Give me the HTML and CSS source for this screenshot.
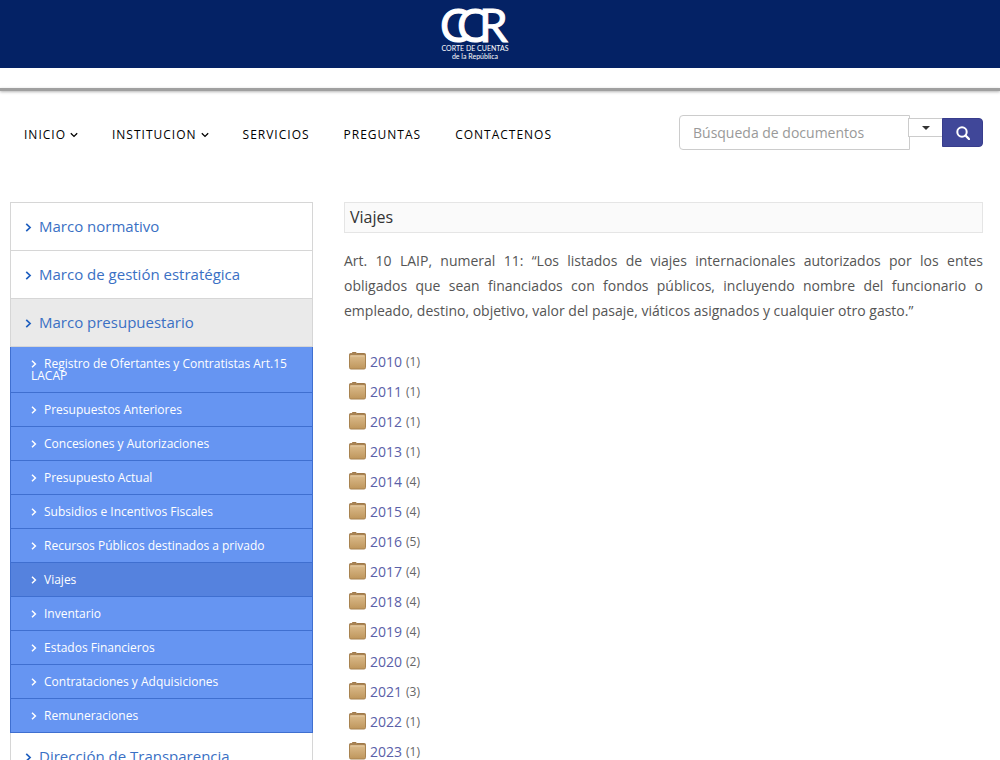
FILE: index.html
```html
<!DOCTYPE html>
<html lang="es">
<head>
<meta charset="utf-8">
<meta name="viewport" content="width=device-width, initial-scale=1">
<title>Viajes - Corte de Cuentas de la República</title>
<link rel="stylesheet" href="styles.css">
</head>
<body>
<svg class="sprite" aria-hidden="true">
  <defs>
    <linearGradient id="kraft" x1="0" y1="0" x2="0" y2="1">
      <stop offset="0" stop-color="#dcbc8c"/>
      <stop offset="1" stop-color="#be965c"/>
    </linearGradient>
  </defs>
  <symbol id="chevron" viewBox="0 0 6 8"><path d="M1 0.8 4.4 4 1 7.2" fill="none" stroke="currentColor" stroke-width="1.5"/></symbol>
  <symbol id="down" viewBox="0 0 8 6"><path d="M0.8 1.2 4 4.4 7.2 1.2" fill="none" stroke="currentColor" stroke-width="1.3"/></symbol>
  <symbol id="folder" viewBox="0 0 17 18">
    <path d="M0.5 5V2.5Q0.5 1.5 1.5 1.5H2.5L3.5 0.5H7L8 1.5H15.5Q16.5 1.5 16.5 2.5V5Z" fill="#a98455" stroke="#a07a4a"/>
    <path d="M0.5 4Q0.5 3 1.5 3H15.5Q16.5 3 16.5 4V15.5Q16.5 17 15 17H2Q0.5 17 0.5 15.5Z" fill="url(#kraft)" stroke="#a88350"/>
    <path d="M1.5 3.9H15.5" stroke="#ead2aa" stroke-width="1"/>
  </symbol>
</svg>

<header class="banner">
  <a class="logo" href="#" aria-label="Corte de Cuentas de la República">
    <svg width="70" height="56" viewBox="0 0 70 56" fill="#fff">
      <g class="logo-mark"><text x="0" y="37">C</text><text x="17" y="37">C</text><text x="39" y="37">R</text></g>
      <text class="logo-name" x="35" y="46">CORTE DE CUENTAS</text>
      <text class="logo-name" x="35" y="54">de la República</text>
    </svg>
  </a>
</header>
<div class="rule"></div>

<div class="topbar">
  <nav class="menu" aria-label="Principal">
    <a href="#">INICIO <svg class="down"><use href="#down"/></svg></a>
    <a href="#">INSTITUCION <svg class="down"><use href="#down"/></svg></a>
    <a href="#">SERVICIOS</a>
    <a href="#">PREGUNTAS</a>
    <a href="#">CONTACTENOS</a>
  </nav>
  <form class="search" role="search">
    <input type="search" aria-label="Búsqueda de documentos" placeholder="Búsqueda de documentos">
    <button class="options" type="button" aria-label="Opciones de búsqueda"><span class="caret"></span></button>
    <button class="submit" type="submit" aria-label="Buscar">
      <svg width="14" height="14" viewBox="0 0 14 14" fill="none" stroke="#fff"><circle cx="6" cy="6" r="4.7" stroke-width="2"/><path d="M9.5 9.5 13 13" stroke-width="2.4" stroke-linecap="round"/></svg>
    </button>
  </form>
</div>

<div class="layout">
  <nav class="side" aria-label="Marcos">
    <ul class="sections">
      <li><a class="section" href="#"><svg class="chevron"><use href="#chevron"/></svg>Marco normativo</a></li>
      <li><a class="section" href="#"><svg class="chevron"><use href="#chevron"/></svg>Marco de gestión estratégica</a></li>
      <li><a class="section open" href="#"><svg class="chevron"><use href="#chevron"/></svg>Marco presupuestario</a>
        <ul class="sub">
          <li><a href="#"><svg class="chevron"><use href="#chevron"/></svg>Registro de Ofertantes y Contratistas Art.15 LACAP</a></li>
          <li><a href="#"><svg class="chevron"><use href="#chevron"/></svg>Presupuestos Anteriores</a></li>
          <li><a href="#"><svg class="chevron"><use href="#chevron"/></svg>Concesiones y Autorizaciones</a></li>
          <li><a href="#"><svg class="chevron"><use href="#chevron"/></svg>Presupuesto Actual</a></li>
          <li><a href="#"><svg class="chevron"><use href="#chevron"/></svg>Subsidios e Incentivos Fiscales</a></li>
          <li><a href="#"><svg class="chevron"><use href="#chevron"/></svg>Recursos Públicos destinados a privado</a></li>
          <li><a class="current" href="#" aria-current="page"><svg class="chevron"><use href="#chevron"/></svg>Viajes</a></li>
          <li><a href="#"><svg class="chevron"><use href="#chevron"/></svg>Inventario</a></li>
          <li><a href="#"><svg class="chevron"><use href="#chevron"/></svg>Estados Financieros</a></li>
          <li><a href="#"><svg class="chevron"><use href="#chevron"/></svg>Contrataciones y Adquisiciones</a></li>
          <li><a href="#"><svg class="chevron"><use href="#chevron"/></svg>Remuneraciones</a></li>
        </ul>
      </li>
      <li><a class="section" href="#"><svg class="chevron"><use href="#chevron"/></svg>Dirección de Transparencia</a></li>
    </ul>
  </nav>

  <main>
    <h1>Viajes</h1>
    <p class="intro">Art. 10 LAIP, numeral 11: “Los listados de viajes internacionales autorizados por los entes obligados que sean financiados con fondos públicos, incluyendo nombre del funcionario o empleado, destino, objetivo, valor del pasaje, viáticos asignados y cualquier otro gasto.”</p>
    <ul class="folders">
      <li><svg class="folder"><use href="#folder"/></svg><a href="#">2010</a> <small>(1)</small></li>
      <li><svg class="folder"><use href="#folder"/></svg><a href="#">2011</a> <small>(1)</small></li>
      <li><svg class="folder"><use href="#folder"/></svg><a href="#">2012</a> <small>(1)</small></li>
      <li><svg class="folder"><use href="#folder"/></svg><a href="#">2013</a> <small>(1)</small></li>
      <li><svg class="folder"><use href="#folder"/></svg><a href="#">2014</a> <small>(4)</small></li>
      <li><svg class="folder"><use href="#folder"/></svg><a href="#">2015</a> <small>(4)</small></li>
      <li><svg class="folder"><use href="#folder"/></svg><a href="#">2016</a> <small>(5)</small></li>
      <li><svg class="folder"><use href="#folder"/></svg><a href="#">2017</a> <small>(4)</small></li>
      <li><svg class="folder"><use href="#folder"/></svg><a href="#">2018</a> <small>(4)</small></li>
      <li><svg class="folder"><use href="#folder"/></svg><a href="#">2019</a> <small>(4)</small></li>
      <li><svg class="folder"><use href="#folder"/></svg><a href="#">2020</a> <small>(2)</small></li>
      <li><svg class="folder"><use href="#folder"/></svg><a href="#">2021</a> <small>(3)</small></li>
      <li><svg class="folder"><use href="#folder"/></svg><a href="#">2022</a> <small>(1)</small></li>
      <li><svg class="folder"><use href="#folder"/></svg><a href="#">2023</a> <small>(1)</small></li>
    </ul>
  </main>
</div>
</body>
</html>
```

FILE: styles.css
```css
* { box-sizing: border-box; }

html { scrollbar-width: none; }

body {
  margin: 0;
  background: #fff;
  color: #555;
  font-family: "Open Sans", sans-serif;
  font-size: 14px;
  font-weight: 400;
}

a { text-decoration: none; }

ul { list-style: none; margin: 0; padding: 0; }

.sprite { display: block; width: 0; height: 0; }

.banner {
  display: flex;
  justify-content: center;
  padding: 5px 50px 7px 0;
  background: #042265;
}

.logo, .logo svg { display: block; overflow: visible; }

.logo-mark { font: 400 46px Lato, sans-serif; stroke: #fff; stroke-width: 1px; }

.logo-name { font: 400 7px Lato, sans-serif; text-anchor: middle; }

.rule {
  height: 3px;
  margin-top: 20px;
  background: #a0a0a0;
  box-shadow: 0 1px 3px rgba(0, 0, 0, 0.3);
}

.topbar {
  display: flex;
  justify-content: space-between;
  align-items: flex-start;
  padding: 24px 17px 47px 24px;
}

.menu { display: flex; gap: 34px; }

.menu a {
  display: flex;
  align-items: center;
  gap: 4px;
  color: #000;
  font-size: 12px;
  letter-spacing: 1px;
  line-height: 40px;
}

.down { width: 8px; height: 6px; }

.search { display: flex; align-items: flex-start; }

.search input {
  width: 231px;
  height: 35px;
  padding: 0 13px;
  border: 1px solid #ccc;
  border-radius: 4px 0 0 4px;
  color: #555;
  font: 400 14px "Open Sans", sans-serif;
}

.search input::placeholder { color: #999; opacity: 1; }

.options {
  display: flex;
  justify-content: center;
  width: 35px;
  height: 19px;
  margin: 3px 0 0 -2px;
  padding: 7px 0 0;
  border: 1px solid #ccc;
  background: #fff;
}

.caret {
  border: 4px solid transparent;
  border-top-color: #333;
  border-bottom: 0;
}

.submit {
  display: flex;
  justify-content: center;
  align-items: center;
  width: 41px;
  height: 29px;
  margin: 3px 0 0 -1px;
  padding: 0;
  border: 1px solid #383d8c;
  border-radius: 0 4px 4px 0;
  background: #404799;
}

.layout {
  display: grid;
  grid-template-columns: 303fr 639fr;
  gap: 31px;
  align-items: start;
  padding: 0 17px 0 10px;
}

.side { border: 1px solid #d6d6d6; }

.section {
  display: block;
  padding: 0 14px;
  border-bottom: 1px solid #d6d6d6;
  color: #3a70c4;
  font-size: 15px;
  line-height: 47px;
}

.section.open { background: #eaeaea; }

.chevron { width: 6px; height: 8px; margin-right: 7px; }

.section .chevron {
  width: 7px;
  height: 9px;
  color: #1f5fbf;
}

.sub {
  margin: 0 -1px;
  border: 1px solid #3f6fd0;
  border-top: 0;
  border-bottom: 0;
}

.sub a {
  display: block;
  padding: 11px 20px 10px;
  border-bottom: 1px solid #3f6fd0;
  background: #6695f2;
  color: #fff;
  font-size: 12px;
  line-height: 12px;
}

.sub .current { background: #5582de; }

h1 {
  margin: 0;
  padding: 0 5px;
  border: 1px solid #e5e5e5;
  background: #fafafa;
  color: #333;
  font-size: 16px;
  font-weight: 400;
  line-height: 29px;
}

.intro {
  margin: 15px 0 23px;
  line-height: 25px;
  text-align: justify;
}

.folders li {
  display: flex;
  align-items: center;
  gap: 4px;
  height: 30px;
  padding-left: 5px;
}

.folder { width: 17px; height: 18px; }

.folders a { color: #5a60a8; font-size: 14px; }

.folders small { color: #666; font-size: 12px; }
```
